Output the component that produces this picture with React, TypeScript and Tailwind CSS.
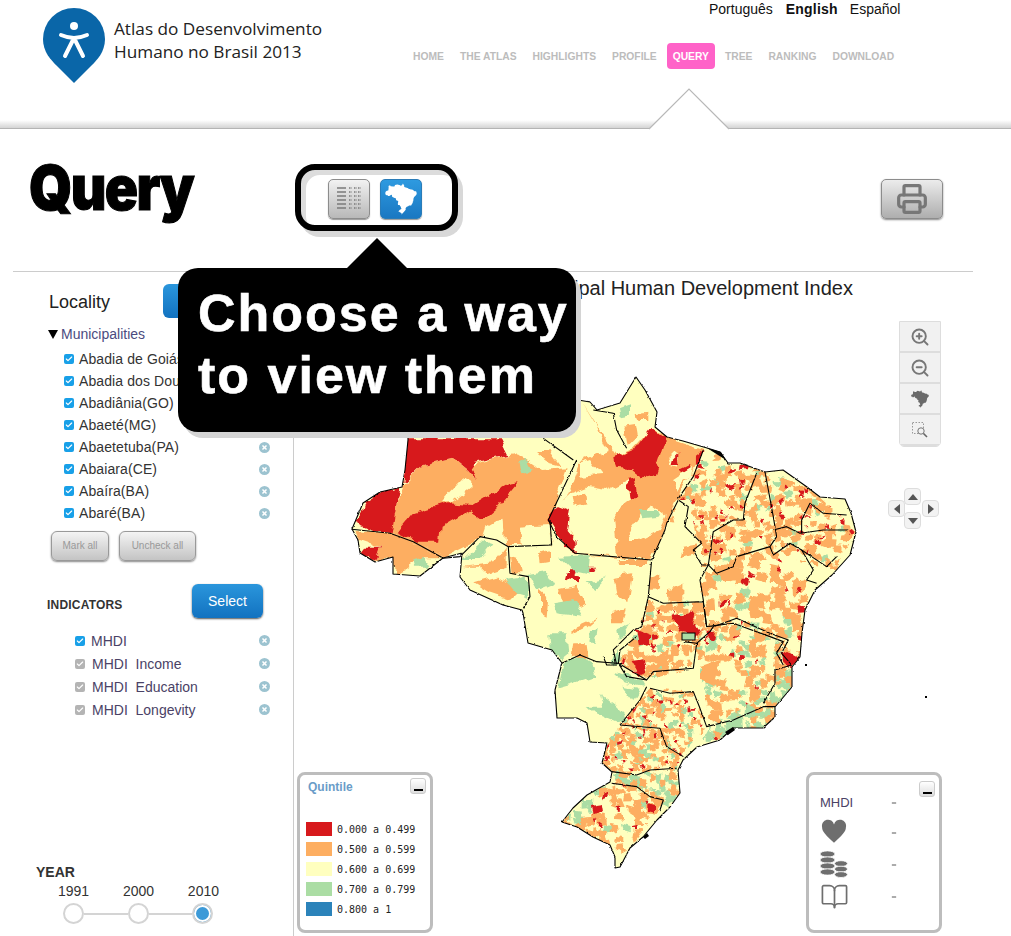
import { Check, Minus, Printer, ZoomIn, ZoomOut, BookOpen } from "lucide-react";

const sans = { fontFamily: '"Liberation Sans", Arial, sans-serif' };

const RED = "#d7191c";
const ORANGE = "#fdae61";
const YELLOW = "#ffffbf";
const GREEN = "#abdda4";
const BLUE = "#2b83ba";

type Pts = number[][];

const toStr = (p: Pts) => p.map((q) => q.join(",")).join(" ");

// country outline, page coordinates
const BRAZIL: Pts = [
  [352, 529], [363, 503], [380, 492], [402, 487], [405, 470], [408, 440], [408, 432], [405, 415], [430, 405],
  [440, 420], [480, 425], [500, 425], [510, 400], [545, 390], [578, 400], [590, 402], [597, 410], [620, 403],
  [636, 377], [645, 390], [657, 412], [655, 427], [667, 437], [683, 441], [707, 448], [720, 452], [728, 463],
  [740, 463], [765, 472], [783, 470], [807, 487], [820, 497], [845, 499], [851, 513], [856, 532], [850, 555],
  [832, 575], [815, 590], [805, 610], [802, 633], [800, 657], [792, 667], [792, 687], [775, 707], [775, 717],
  [763, 728], [733, 728], [720, 740], [697, 747], [683, 760], [678, 770], [680, 793], [670, 807], [657, 820],
  [643, 837], [630, 848], [620, 867], [615, 868], [615, 857], [610, 845], [593, 837], [577, 827], [562, 822],
  [573, 808], [587, 795], [610, 782], [612, 772], [602, 763], [607, 743], [590, 742], [587, 723], [577, 718],
  [557, 718], [555, 690], [562, 663], [552, 650], [528, 643], [523, 613], [522, 610], [503, 605], [470, 590],
  [460, 577], [462, 553], [443, 558], [420, 576], [393, 574], [393, 557], [375, 562], [360, 553], [358, 540],
];

const mosaics: { pts: Pts; step: number; w: number[] }[] = [
  { pts: [[705, 450], [765, 472], [808, 487], [856, 530], [835, 570], [795, 560], [770, 545], [740, 565], [700, 565], [690, 500], [680, 500]], step: 5, w: [0.09, 0.36, 0.52, 0.03] },
  { pts: [[700, 565], [770, 545], [810, 585], [800, 665], [775, 640], [700, 630]], step: 7, w: [0.06, 0.36, 0.54, 0.04] },
  { pts: [[695, 640], [740, 620], [790, 650], [795, 690], [770, 710], [710, 725]], step: 5, w: [0.06, 0.3, 0.54, 0.1] },
  { pts: [[617, 663], [640, 627], [648, 600], [703, 602], [705, 627], [690, 660], [693, 668], [647, 680]], step: 5, w: [0.05, 0.42, 0.48, 0.05] },
  { pts: [[650, 688], [693, 692], [707, 727], [680, 757], [660, 728], [620, 725]], step: 4, w: [0.08, 0.3, 0.52, 0.1] },
  { pts: [[620, 725], [660, 728], [680, 757], [678, 770], [612, 772], [602, 763], [607, 743]], step: 4, w: [0.07, 0.36, 0.45, 0.12] },
  { pts: [[612, 772], [678, 770], [680, 793], [670, 807], [650, 800], [610, 782]], step: 5, w: [0.02, 0.14, 0.54, 0.3] },
  { pts: [[610, 782], [650, 790], [665, 800], [630, 848], [615, 857], [593, 837], [562, 822], [587, 795]], step: 6, w: [0.05, 0.25, 0.62, 0.08] },
  { pts: [[775, 690], [792, 667], [792, 687], [775, 717], [763, 728], [720, 738], [700, 745], [710, 727]], step: 5, w: [0.01, 0.08, 0.41, 0.5] },
  { pts: [[678, 500], [689, 507], [685, 527], [702, 543], [702, 565], [700, 580], [703, 600], [663, 603], [648, 597], [652, 560], [665, 530]], step: 11, w: [0, 0.14, 0.8, 0.06] },
];

function buildMosaic(pts: Pts, step: number, w: number[], seed: number) {
  let s = seed;
  const rnd = () => {
    s = (s * 16807) % 2147483647;
    return s / 2147483647;
  };
  const xs = pts.map((p) => p[0]);
  const ys = pts.map((p) => p[1]);
  const d = ["", "", "", ""];
  for (let x = Math.min(...xs); x < Math.max(...xs); x += step) {
    for (let y = Math.min(...ys); y < Math.max(...ys); y += step) {
      const r = rnd();
      const c = r < w[0] ? 0 : r < w[0] + w[1] ? 1 : r < w[0] + w[1] + w[2] ? 2 : 3;
      const j = () => (rnd() - 0.5) * step * 0.7;
      // reds stay small, the rest overlap into blobs
      const k = c === 0 ? 0.7 : 1.25;
      d[c] += `M${(x + j()).toFixed(1)} ${(y + j()).toFixed(1)}L${(x + step * k + j()).toFixed(1)} ${(y + j()).toFixed(1)}L${(x + step * k + j()).toFixed(1)} ${(y + step * k + j()).toFixed(1)}L${(x + j()).toFixed(1)} ${(y + step * k + j()).toFixed(1)}Z`;
    }
  }
  return d;
}

// big patches, coordinates of the north crop (origin 340,370, 3x)
const north: [string, Pts][] = [
  [ORANGE, [[725, 95], [770, 170], [800, 240], [720, 275], [690, 360], [665, 400], [710, 550], [835, 565], [935, 568], [975, 480], [1015, 385], [1090, 240], [1000, 210], [940, 170], [880, 235], [830, 260]]],
  [YELLOW, [[660, 400], [690, 370], [740, 350], [800, 360], [860, 330], [870, 390], [820, 430], [835, 560], [710, 550], [690, 480]]],
  [YELLOW, [[720, 280], [750, 270], [785, 315], [720, 320]]],
  [ORANGE, [[695, 380], [735, 365], [740, 400], [700, 410]]],
  [YELLOW, [[865, 490], [930, 400], [980, 440], [960, 480], [900, 510], [870, 510]]],
  [GREEN, [[900, 420], [950, 420], [960, 440], [910, 445]]],
  [GREEN, [[840, 110], [870, 100], [870, 140], [845, 145]]],
  [ORANGE, [[890, 130], [925, 125], [925, 150], [895, 150]]],
  [ORANGE, [[850, 170], [885, 165], [890, 195], [860, 225]]],
  [YELLOW, [[985, 260], [1000, 245], [1020, 260], [1010, 290], [990, 285]]],
  [YELLOW, [[1000, 330], [1060, 290], [1050, 320], [1010, 365]]],
  [ORANGE, [[190, 345], [240, 290], [340, 265], [385, 300], [410, 330], [390, 285], [510, 255], [530, 250], [600, 300], [680, 295], [630, 450], [635, 525], [495, 525], [490, 440], [430, 500], [400, 520], [310, 565], [220, 520], [150, 490], [170, 400]]],
  [YELLOW, [[300, 400], [370, 325], [400, 345], [335, 395]]],
  [YELLOW, [[520, 230], [610, 210], [700, 270], [680, 295], [600, 290], [560, 250]]],
  [ORANGE, [[595, 240], [625, 240], [660, 290], [620, 280]]],
  [GREEN, [[535, 280], [560, 270], [575, 300], [545, 310]]],
  [YELLOW, [[540, 470], [630, 465], [635, 525], [545, 525]]],
  [YELLOW, [[440, 470], [490, 440], [495, 525], [430, 500]]],
  [ORANGE, [[45, 480], [150, 490], [220, 520], [310, 565], [240, 565], [200, 595], [160, 612], [160, 560], [105, 575], [120, 530], [60, 510]]],
  [GREEN, [[220, 570], [250, 560], [270, 590], [225, 590]]],
  [RED, [[820, 265], [890, 235], [935, 170], [980, 205], [945, 315], [915, 322], [880, 295], [825, 290]]],
  [RED, [[860, 330], [885, 325], [892, 385], [870, 385]]],
  [RED, [[650, 405], [690, 420], [680, 480], [710, 515], [710, 550], [675, 530], [625, 450]]],
  [RED, [[1000, 265], [1015, 250], [1015, 285], [995, 285]]],
  [RED, [[1020, 300], [1050, 285], [1055, 295], [1030, 310]]],
  [RED, [[1065, 260], [1090, 240], [1085, 280], [1065, 285]]],
  [RED, [[200, 205], [480, 205], [505, 255], [395, 280], [410, 330], [385, 300], [340, 265], [240, 290], [190, 340]]],
  [RED, [[75, 395], [120, 365], [178, 350], [155, 490], [100, 480], [45, 455], [65, 430]]],
  [RED, [[530, 340], [500, 345], [400, 405], [320, 400], [220, 430], [170, 490], [225, 515], [300, 515], [305, 470], [390, 420], [430, 450], [465, 420]]],
  [RED, [[75, 530], [120, 530], [105, 575], [60, 550]]],
  [GREEN, [[365, 570], [430, 510], [460, 520], [420, 570]]],
  [ORANGE, [[365, 590], [460, 580], [500, 530], [500, 590], [440, 610], [420, 590]]],
  [ORANGE, [[400, 640], [470, 620], [540, 660], [510, 690], [450, 670]]],
  [GREEN, [[495, 630], [560, 620], [565, 680], [530, 670]]],
  [GREEN, [[565, 615], [620, 605], [640, 640], [590, 660]]],
  [ORANGE, [[510, 560], [540, 570], [545, 610], [515, 610]]],
  [ORANGE, [[600, 550], [630, 540], [630, 575], [605, 580]]],
  [GREEN, [[660, 560], [750, 555], [745, 610], [700, 600]]],
  [RED, [[680, 610], [720, 620], [720, 640], [675, 630]]],
  [RED, [[690, 595], [705, 595], [700, 615], [690, 615]]],
  [RED, [[745, 590], [765, 590], [760, 600], [745, 600]]],
  [ORANGE, [[820, 620], [880, 610], [865, 700], [830, 670]]],
  [ORANGE, [[660, 660], [710, 650], [740, 700], [720, 710], [670, 700]]],
  [GREEN, [[640, 700], [700, 690], [730, 740], [650, 730]]],
  [ORANGE, [[600, 660], [625, 680], [620, 740], [600, 730]]],
  [ORANGE, [[830, 570], [930, 570], [925, 585], [835, 585]]],
  [ORANGE, [[690, 780], [770, 745], [740, 770], [700, 790]]],
  [ORANGE, [[810, 730], [860, 715], [850, 760], [815, 760]]],
  [GREEN, [[625, 790], [680, 790], [670, 870], [630, 850]]],
  [ORANGE, [[700, 820], [735, 820], [730, 860], [695, 860]]],
  [GREEN, [[750, 780], [770, 770], [765, 815], [745, 815]]],
  [GREEN, [[835, 780], [870, 765], [840, 810]]],
  [GREEN, [[740, 640], [800, 625], [770, 660]]],
];

// coordinates of the south crop (origin 480,600, 3x)
const south: [string, Pts][] = [
  [GREEN, [[250, 190], [300, 165], [340, 190], [350, 230], [290, 250], [235, 265]]],
  [GREEN, [[360, 280], [410, 320], [450, 360], [410, 370], [340, 340], [320, 320], [370, 320]]],
  [GREEN, [[410, 215], [480, 240], [490, 260], [430, 250]]],
  [GREEN, [[430, 260], [480, 270], [460, 300]]],
  [GREEN, [[215, 110], [260, 105], [265, 160], [240, 180], [215, 150]]],
  [ORANGE, [[285, 140], [320, 135], [325, 170], [290, 170]]],
  [GREEN, [[390, 190], [420, 150], [415, 195]]],
  [RED, [[575, 50], [630, 40], [665, 90], [650, 110], [605, 95]]],
  [RED, [[470, 90], [510, 105], [510, 130], [480, 140]]],
  [RED, [[455, 180], [490, 175], [500, 215], [480, 225]]],
  [RED, [[680, 95], [705, 95], [700, 125], [680, 120]]],
  [RED, [[905, 150], [960, 180], [930, 205], [905, 180]]],
  [RED, [[330, 615], [365, 610], [370, 640], [335, 645]]],
  [RED, [[505, 610], [525, 615], [525, 640], [505, 635]]],
  [ORANGE, [[660, 200], [720, 180], [700, 260], [660, 240]]],
];

const northLines: Pts[] = [
  [[710, 270], [625, 450], [650, 500], [705, 550]],
  [[705, 550], [935, 570], [975, 480], [980, 460], [1015, 390]],
  [[505, 530], [635, 525], [630, 450]],
  [[35, 478], [150, 490], [220, 515], [310, 565], [360, 560], [420, 500], [470, 510], [505, 530], [510, 610], [565, 620], [570, 680], [550, 715]],
  [[935, 570], [925, 680], [905, 770], [880, 780], [820, 840], [830, 885], [800, 885], [790, 860]],
  [[925, 680], [970, 700], [1090, 695], [1100, 770]],
  [[1015, 390], [1045, 410], [1035, 470], [1085, 520], [1060, 540], [1085, 585], [1105, 585], [1080, 630], [1090, 690], [1100, 770], [1180, 760], [1290, 800], [1330, 815], [1310, 850], [1330, 885]],
  [[1275, 305], [1300, 440], [1310, 500], [1290, 530], [1190, 560], [1180, 590], [1130, 610], [1105, 585]],
  [[1090, 240], [1060, 320], [1015, 385]],
  [[1250, 310], [1215, 400], [1210, 450], [1180, 450], [1120, 485], [1105, 585]],
  [[1290, 530], [1300, 555], [1350, 520], [1385, 540], [1420, 600], [1400, 630], [1430, 640]],
  [[1300, 480], [1340, 470], [1380, 490], [1450, 480], [1525, 480]],
  [[1385, 490], [1385, 450], [1410, 400], [1450, 430], [1520, 435]],
  [[1385, 540], [1460, 590], [1490, 560]],
  [[760, 120], [820, 130], [830, 180], [860, 235]],
  [[610, 205], [700, 270]],
];

const southLines: Pts[] = [
  [[245, 190], [300, 165], [350, 185], [415, 190], [500, 240]],
  [[500, 260], [480, 300], [420, 375]],
  [[415, 190], [420, 150], [470, 110]],
  [[415, 190], [440, 230], [500, 240], [520, 215], [640, 205], [650, 130], [610, 125]],
  [[510, 265], [570, 280], [640, 275], [660, 325], [680, 380], [760, 360], [850, 320], [885, 320]],
  [[650, 130], [690, 95], [700, 80], [770, 55], [870, 100], [925, 120], [905, 160], [935, 195], [885, 210], [885, 250], [850, 310]],
  [[420, 375], [540, 385], [560, 440], [610, 470]],
  [[395, 515], [470, 525], [510, 510], [590, 505]],
  [[395, 550], [470, 560], [510, 590], [550, 600], [540, 630]],
];

function BrazilMap() {
  return (
    <svg viewBox="294 272 717 664" className="absolute left-0 top-0 h-[664px] w-[717px]">
      <defs>
        <clipPath id="br">
          <polygon points={toStr(BRAZIL)} />
        </clipPath>
        {mosaics.map((m, i) => (
          <clipPath id={`m${i}`} key={i}>
            <polygon points={toStr(m.pts)} />
          </clipPath>
        ))}
        {/* roughen the straight polygon edges so they read as municipal borders */}
        <filter id="blob" x="-5%" y="-5%" width="110%" height="110%" colorInterpolationFilters="sRGB">
          <feTurbulence type="fractalNoise" baseFrequency="0.09" numOctaves="2" seed="4" />
          <feDisplacementMap in="SourceGraphic" scale="9" xChannelSelector="R" yChannelSelector="G" />
        </filter>
        <filter id="fine" x="-5%" y="-5%" width="110%" height="110%" colorInterpolationFilters="sRGB">
          <feTurbulence type="fractalNoise" baseFrequency="0.2" numOctaves="2" seed="11" />
          <feDisplacementMap in="SourceGraphic" scale="5" xChannelSelector="R" yChannelSelector="G" />
        </filter>
        <filter id="edge" x="-5%" y="-5%" width="110%" height="110%" colorInterpolationFilters="sRGB">
          <feTurbulence type="fractalNoise" baseFrequency="0.3" numOctaves="1" seed="9" />
          <feDisplacementMap in="SourceGraphic" scale="2.5" xChannelSelector="R" yChannelSelector="G" />
        </filter>
      </defs>
      <polygon points={toStr(BRAZIL)} fill={YELLOW} />
      <g clipPath="url(#br)">
        <g filter="url(#blob)">
          <g transform="translate(340 370) scale(0.3333)">
            {north.map(([c, p], i) => (
              <polygon key={i} points={toStr(p)} fill={c} />
            ))}
          </g>
        </g>
        <g filter="url(#fine)">
          {mosaics.map((m, i) => {
            const d = buildMosaic(m.pts, m.step, m.w, 7919 * (i + 3));
            return (
              <g key={i} clipPath={`url(#m${i})`}>
                <path d={d[2]} fill={YELLOW} />
                <path d={d[3]} fill={GREEN} />
                <path d={d[1]} fill={ORANGE} />
                <path d={d[0]} fill={RED} />
              </g>
            );
          })}
        </g>
        <g filter="url(#blob)">
          <g transform="translate(480 600) scale(0.3333)">
            {south.map(([c, p], i) => (
              <polygon key={i} points={toStr(p)} fill={c} />
            ))}
          </g>
        </g>
      </g>
      <g filter="url(#edge)" fill="none" stroke="#000" strokeWidth="1.1" strokeLinejoin="round">
        <polygon points={toStr(BRAZIL)} />
        <g transform="translate(340 370) scale(0.3333)" strokeWidth="3.3">
          {northLines.map((p, i) => (
            <polyline key={i} points={toStr(p)} />
          ))}
        </g>
        <g transform="translate(480 600) scale(0.3333)" strokeWidth="3.3">
          {southLines.map((p, i) => (
            <polyline key={i} points={toStr(p)} />
          ))}
        </g>
      </g>
      <rect x="682" y="633" width="13" height="7" fill={GREEN} stroke="#000" />
      <path d="M707 448l14 4 5 8-8-5zM643 837l4-4 2 3-4 3zM725 732l8-5 2 3-7 5z" fill="#000" />
      <rect x="925" y="696" width="2" height="2" fill="#000" />
      <rect x="805" y="664" width="2" height="2" fill="#000" />
    </svg>
  );
}

function RemoveIcon() {
  return (
    <svg viewBox="0 0 12 12" className="h-[11px] w-[11px]">
      <circle cx="6" cy="6" r="6" fill="#9cc3d0" />
      <path d="M3.8 3.8l4.4 4.4M8.2 3.8l-4.4 4.4" stroke="#fff" strokeWidth="1.6" />
    </svg>
  );
}

function Tick({ gray }: { gray?: boolean }) {
  return (
    <span className={`flex h-[10px] w-[10px] items-center justify-center rounded-[2px] ${gray ? "bg-[#b4b4b4]" : "bg-[#18a0e8]"}`}>
      <Check size={8} strokeWidth={3.5} color="#fff" />
    </span>
  );
}

function MinBtn() {
  return (
    <div className="flex h-4 w-4 items-end justify-center rounded-[3px] border border-[#ccc] bg-linear-to-b from-white to-[#ddd] pb-[2px]">
      <span className="h-[2px] w-[9px] bg-black" />
    </div>
  );
}

const places = ["Abadia de Goiás(GO)", "Abadia dos Dourados(MG)", "Abadiânia(GO)", "Abaeté(MG)", "Abaetetuba(PA)", "Abaiara(CE)", "Abaíra(BA)", "Abaré(BA)"];
const nav = ["HOME", "THE ATLAS", "HIGHLIGHTS", "PROFILE", "QUERY", "TREE", "RANKING", "DOWNLOAD"];
const legend = [
  [RED, "0.000 a 0.499"],
  [ORANGE, "0.500 a 0.599"],
  [YELLOW, "0.600 a 0.699"],
  [GREEN, "0.700 a 0.799"],
  [BLUE, "0.800 a 1"],
];

function Header() {
  return (
    <header className="relative">
      <div className="flex h-[120px]">
        <div className="flex w-[407px] items-start pl-[43px] pt-2">
          <svg viewBox="0 0 62 76" className="h-[76px] w-[62px]">
            <path d="M31 0a31 31 0 0 1 31 31c0 13-8 21-14 27L31 75 14 58C8 52 0 44 0 31A31 31 0 0 1 31 0z" fill="#0a66a8" />
            <circle cx="31" cy="18" r="4" fill="#fff" />
            <path d="M18 27c9 4 17 4 26 0M31 30l-9 18M31 30l9 18" fill="none" stroke="#fff" strokeWidth="4" strokeLinecap="round" />
          </svg>
          <div className="ml-[9px] mt-[9px] text-[17.2px] leading-[23px] text-[#222]" style={{ fontFamily: '"Open Sans", sans-serif' }}>
            Atlas do Desenvolvimento
            <br />
            Humano no Brasil 2013
          </div>
        </div>
        <div>
          <div className="flex pl-[302px] text-sm leading-[18px] text-[#111]" style={sans}>
            <span className="mr-[13px]">Português</span>
            <span className="mr-3 font-bold tracking-[0.2px]">English</span>
            <span>Español</span>
          </div>
          <nav className="mt-[25px] flex h-[26px] gap-1 text-[10.3px] font-bold" style={sans}>
            {nav.map((n) => (
              <span key={n} className={`flex items-center rounded-[4px] px-1.5 pt-px ${n === "QUERY" ? "bg-[#ff62c8] text-white" : "text-[#bcbcbc]"}`}>
                {n}
              </span>
            ))}
          </nav>
        </div>
      </div>
      <div className="h-[9px] border-b border-[#b4b4b4] bg-linear-to-b from-white to-[#d4d4d4]" />
      <svg viewBox="0 0 82 42" className="absolute left-[648px] top-[88px] h-[42px] w-[82px]">
        <path d="M1 41 41 1l40 40z" fill="#fff" />
        <path d="M1 41 41 1l40 40" fill="none" stroke="#b8b8b8" strokeWidth="1.2" />
      </svg>
    </header>
  );
}

function TitleRow() {
  return (
    <div className="mx-[13px] flex h-[143px] w-[960px] items-start border-b border-[#ccc]">
      <h1 className="w-[282px] origin-top-left scale-y-[1.12] pl-[16px] pt-[24px] text-[55px] font-black leading-[56px] tracking-[-1.6px] text-black [-webkit-text-stroke:1px_black]" style={{ fontFamily: "Inter, sans-serif" }}>
        Query
      </h1>
      <div className="mt-[35px] flex h-[67px] w-[163px] items-center gap-[10px] rounded-[20px] border-[6px] border-black bg-white pl-[27px] pt-[2px] shadow-[5px_6px_0_#d8d8d8,inset_5px_5px_0_#dcdcdc]">
        <div className="flex h-10 w-[42px] items-center justify-center rounded-[5px] border border-[#8c8c8c] bg-linear-to-b from-[#f2f2f2] to-[#b8b8b8] shadow-[0_1px_1px_#999]">
          <svg viewBox="0 0 26 26" className="h-[26px] w-[26px]" stroke="#7a7a7a" strokeWidth="1.5">
            {[2, 6, 10, 14, 18, 22].map((y) => (
              <g key={y}>
                <path d={`M1 ${y}h9`} />
                <path d={`M13 ${y}h3M18 ${y}h3M22 ${y}h3`} strokeDasharray="1.5 1" />
              </g>
            ))}
          </svg>
        </div>
        <div className="flex h-10 w-[42px] items-center justify-center rounded-[5px] border border-[#2a7cb8] bg-linear-to-b from-[#2e9ae0] to-[#1a78c2] shadow-[0_1px_1px_#999]">
          <svg viewBox="350 375 510 495" className="h-[32px] w-[32px]">
            <polygon points={toStr(BRAZIL)} fill="#fff" />
          </svg>
        </div>
      </div>
      <div className="ml-[423px] mt-[50px] flex h-10 w-[62px] items-center justify-center rounded-[5px] border border-[#8c8c8c] bg-linear-to-b from-[#ececec] to-[#aeaeae] shadow-[0_1px_2px_#888]">
        <Printer size={32} strokeWidth={2.4} color="#777" />
      </div>
    </div>
  );
}

function Sidebar() {
  return (
    <aside className="w-[294px] shrink-0 border-r border-[#ccc] text-sm text-[#333]" style={sans}>
      <div className="flex h-[50px] items-center pl-[49px] pt-[8px]">
        <span className="w-[114px] pt-[2px] text-lg text-[#222]">Locality</span>
        <span className="h-[34px] w-[71px] rounded-md bg-linear-to-b from-[#2a96dc] to-[#1272c0]" />
      </div>
      <div className="flex h-[24px] items-center gap-[3px] pl-[48px] text-[#4b4b80]">
        <span className="h-0 w-0 border-x-[5px] border-t-[9px] border-x-transparent border-t-black" />
        Municipalities
      </div>
      <ul className="mt-[2px]">
        {places.map((p) => (
          <li key={p} className="flex h-[22px] items-center pl-[64px] pr-[23px]">
            <Tick />
            <span className="ml-[5px] tracking-[0.1px]">{p}</span>
            <span className="ml-auto">
              <RemoveIcon />
            </span>
          </li>
        ))}
      </ul>
      <div className="ml-[51px] mt-[7px] flex gap-[10px] text-[10px] text-[#999]">
        <span className="flex h-[30px] w-[58px] items-center justify-center rounded-md border border-[#999] bg-linear-to-b from-[#f4f4f4] to-[#c4c4c4] shadow-[0_1px_2px_#888]">Mark all</span>
        <span className="flex h-[30px] w-[77px] items-center justify-center rounded-md border border-[#999] bg-linear-to-b from-[#f4f4f4] to-[#c4c4c4] shadow-[0_1px_2px_#888]">Uncheck all</span>
      </div>
      <div className="mt-[23px] flex h-[34px] items-center pl-[47px]">
        <span className="w-[145px] pt-[8px] text-xs font-bold tracking-[0.2px]">INDICATORS</span>
        <span className="flex h-[34px] w-[71px] items-center justify-center rounded-md bg-linear-to-b from-[#2a96dc] to-[#1272c0] pb-[1px] text-sm text-white shadow-[0_1px_2px_#555]">Select</span>
      </div>
      <ul className="mt-[11px]">
        {["MHDI", "MHDI  Income", "MHDI  Education", "MHDI  Longevity"].map((m, i) => (
          <li key={m} className="flex h-[23px] items-center pl-[75px] pr-[23px] text-[#4a4266]">
            <Tick gray={i > 0} />
            <span className={`whitespace-pre ${i ? "ml-[7px]" : "ml-[6px]"}`}>{m}</span>
            <span className="ml-auto">
              <RemoveIcon />
            </span>
          </li>
        ))}
      </ul>
      <div className="mt-[142px] pl-[36px] text-sm font-bold leading-[18px]">YEAR</div>
      <div className="ml-[58px] mt-px flex w-[161px] justify-between leading-[18px]">
        <span>1991</span>
        <span>2000</span>
        <span>2010</span>
      </div>
      <div className="ml-[63px] mt-[3px] flex items-center">
        <span className="h-[21px] w-[21px] rounded-full border-2 border-[#d4d4d4] bg-white" />
        <span className="h-[2px] w-[44px] bg-[#d4d4d4]" />
        <span className="h-[21px] w-[21px] rounded-full border-2 border-[#d4d4d4] bg-white" />
        <span className="h-[2px] w-[43px] bg-[#d4d4d4]" />
        <span className="h-[21px] w-[21px] rounded-full border-2 border-[#d4d4d4] bg-[#3c9ad8] shadow-[inset_0_0_0_2px_#fff]" />
      </div>
    </aside>
  );
}

function MapControls() {
  const cell = "flex h-[31px] items-center justify-center border-b-2 border-[#ddd] bg-[#f1f1f1]";
  const pan = "absolute flex h-[17px] w-[17px] items-center justify-center rounded-[4px] border border-[#ddd] bg-[#f3f3f3]";
  return (
    <>
      <div className="absolute left-[605px] top-[49px] w-[42px] overflow-hidden rounded-b-[5px] border border-[#ddd]">
        <div className={cell}><ZoomIn size={20} strokeWidth={2.3} color="#777" /></div>
        <div className={cell}><ZoomOut size={20} strokeWidth={2.3} color="#777" /></div>
        <div className={cell}>
          <svg viewBox="350 375 510 495" className="h-[18px] w-[18px]"><polygon points={toStr(BRAZIL)} fill="#6a6a6a" /></svg>
        </div>
        <div className={cell}>
          <svg viewBox="0 0 18 18" className="h-[18px] w-[18px]" fill="none" stroke="#999">
            <path d="M1.5 1.5h11v11h-11z" strokeDasharray="1.5 1.5" />
            <circle cx="10" cy="10" r="3.2" fill="#f1f1f1" stroke="#777" />
            <path d="M12.5 12.5l3.5 3.5" stroke="#666" strokeWidth="1.6" />
          </svg>
        </div>
      </div>
      <div className="absolute left-[594px] top-[216px] h-[44px] w-[50px]">
        <span className={`${pan} left-[16px] top-0`}><span className="h-0 w-0 border-x-[5px] border-b-[6px] border-x-transparent border-b-[#555]" /></span>
        <span className={`${pan} left-[16px] top-[24px]`}><span className="h-0 w-0 border-x-[5px] border-t-[6px] border-x-transparent border-t-[#555]" /></span>
        <span className={`${pan} left-0 top-[12px]`}><span className="h-0 w-0 border-y-[5px] border-r-[6px] border-y-transparent border-r-[#555]" /></span>
        <span className={`${pan} left-[34px] top-[12px]`}><span className="h-0 w-0 border-y-[5px] border-l-[6px] border-y-transparent border-l-[#555]" /></span>
      </div>
    </>
  );
}

function QuintilePanel() {
  return (
    <div className="absolute left-[3px] top-[500px] h-[161px] w-[136px] rounded-[8px] border-[3px] border-[#bdbdbd] bg-white pl-[6px] pt-[3px]" style={sans}>
      <div className="flex items-start justify-between pr-[4px]">
        <span className="pl-[2px] pt-px text-xs font-bold text-[#6a9cc8]">Quintile</span>
        <MinBtn />
      </div>
      <div className="mt-[24px] flex flex-col">
        {legend.map(([c, t]) => (
          <div key={t} className="flex h-5 items-center gap-[5px]">
            <span className="h-[14px] w-[26px]" style={{ backgroundColor: c }} />
            <span className="text-[10px] text-[#222]" style={{ fontFamily: '"DejaVu Sans Mono", monospace' }}>{t}</span>
          </div>
        ))}
      </div>
    </div>
  );
}

function ValuePanel() {
  return (
    <div className="absolute left-[512px] top-[500px] h-[161px] w-[136px] rounded-[8px] border-[3px] border-[#bdbdbd] bg-white" style={sans}>
      <div className="absolute right-[4px] top-[6px]"><MinBtn /></div>
      <div className="ml-[11px] mt-[15px] grid w-[100px] grid-cols-[71px_1fr] items-center text-[#444]">
        <span className="flex h-[26px] items-center text-[13px] text-[#4a4266]">MHDI</span>
        <Minus size={6} strokeWidth={3} color="#222" />
        <span className="flex h-[32px] items-center">
          <svg viewBox="0 0 24 24" className="ml-[1px] h-[26px] w-[26px]" fill="#6e6e6e"><path d="M12 22C5 15 1 12 1 7.5A5.5 5.5 0 0 1 12 5a5.5 5.5 0 0 1 11 2.5C23 12 19 15 12 22z" /></svg>
        </span>
        <Minus size={6} strokeWidth={3} color="#222" className="mt-[2px]" />
        <span className="flex h-[32px] items-center">
          <svg viewBox="0 0 28 28" className="h-7 w-7" fill="#6e6e6e">
            {[1, 7, 13, 19].map((y) => <ellipse key={y} cx="7.5" cy={y + 3} rx="7.5" ry="3.1" stroke="#fff" strokeWidth="0.8" />)}
            {[11, 16.5, 22].map((y) => <ellipse key={y} cx="21" cy={y + 2.6} rx="6.5" ry="2.9" stroke="#fff" strokeWidth="0.8" />)}
          </svg>
        </span>
        <Minus size={6} strokeWidth={3} color="#222" className="mt-[2px]" />
        <span className="flex h-[32px] items-center">
          <BookOpen size={29} strokeWidth={1.4} color="#6e6e6e" />
        </span>
        <Minus size={6} strokeWidth={3} color="#222" className="mt-[2px]" />
      </div>
    </div>
  );
}

function Callout() {
  return (
    <div className="absolute left-[178px] top-[268px] h-[164px] w-[398px] rounded-[20px] bg-black pl-[20px] pt-[14px] text-[52px] font-bold leading-[62px] tracking-[2px] text-white shadow-[5px_6px_0_#d4d4d4] [-webkit-text-stroke:0.6px_white]" style={sans}>
      <span className="absolute -top-[30px] left-[169px] h-0 w-0 border-x-[30px] border-b-[30px] border-x-transparent border-b-black" />
      Choose a way
      <br />
      to view them
    </div>
  );
}

export default function App() {
  return (
    <div className="relative h-[936px] w-[1011px] overflow-hidden bg-white">
      <Header />
      <TitleRow />
      <div className="flex h-[664px]">
        <Sidebar />
        <main className="relative flex-1" style={sans}>
          <BrazilMap />
          <div className="relative flex justify-end pr-[158px] pt-[4px] text-[20px] leading-6 text-[#222]">
            Municipal Human Development Index
          </div>
          <MapControls />
          <QuintilePanel />
          <ValuePanel />
        </main>
      </div>
      <Callout />
    </div>
  );
}
